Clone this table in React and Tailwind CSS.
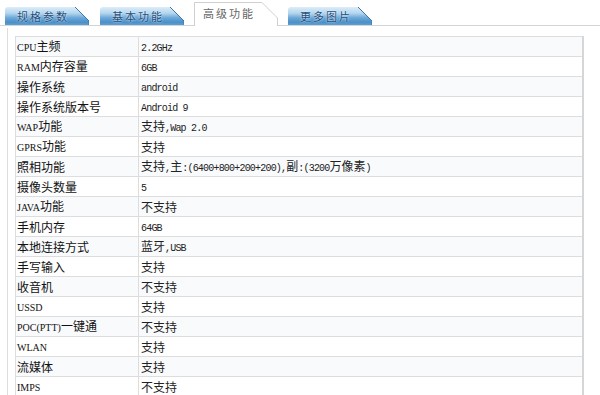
import React from 'react';

const rows = [
  ['CPU主频', '2.2GHz'],
  ['RAM内存容量', '6GB'],
  ['操作系统', 'android'],
  ['操作系统版本号', 'Android 9'],
  ['WAP功能', '支持,Wap 2.0'],
  ['GPRS功能', '支持'],
  ['照相功能', '支持,主:(6400+800+200+200),副:(3200万像素)'],
  ['摄像头数量', '5'],
  ['JAVA功能', '不支持'],
  ['手机内存', '64GB'],
  ['本地连接方式', '蓝牙,USB'],
  ['手写输入', '支持'],
  ['收音机', '不支持'],
  ['USSD', '支持'],
  ['POC(PTT)一键通', '不支持'],
  ['WLAN', '支持'],
  ['流媒体', '支持'],
  ['IMPS', '不支持'],
];

// split ascii runs so they get the narrow latin face
const Mixed = ({ text, asciiClass }) => (
  <span>
    {text.split(/([\x00-\x7f]+)/).map((part, i) =>
      /^[\x00-\x7f]+$/.test(part) ? (
        <span key={i} className={asciiClass}>{part}</span>
      ) : (
        part
      )
    )}
  </span>
);

const BlueTab = ({ label }) => (
  <div className="relative w-[84px] h-[18px] shrink-0">
    <svg className="absolute inset-0" width="84" height="18" viewBox="0 0 84 18">
      <defs>
        <linearGradient id="tabg" x1="0" y1="0" x2="0" y2="1">
          <stop offset="0" stopColor="#dcedf8" />
          <stop offset="0.35" stopColor="#b3d5ee" />
          <stop offset="0.6" stopColor="#6ca8d8" />
          <stop offset="0.85" stopColor="#4a90c9" />
          <stop offset="1" stopColor="#5f9fd2" />
        </linearGradient>
      </defs>
      <path d="M0,18 L0,3 Q0,0 3,0 L70,0 L84,14 L84,18 Z" fill="url(#tabg)" />
      <path d="M70,0 L84,14 L84,18" fill="none" stroke="#3b78a9" strokeWidth="1" />
    </svg>
    <span className="relative flex h-full items-center pl-[12px] text-[11px] tracking-[2px] text-[#234f7c] font-['Noto_Sans_CJK_SC',sans-serif] [text-shadow:0_0_2px_#fff]">
      {label}
    </span>
  </div>
);

const ActiveTab = ({ label }) => (
  <div className="relative w-[84px] h-[24px] shrink-0 -mb-px">
    <svg className="absolute inset-0" width="84" height="24" viewBox="0 0 84 24">
      <path d="M0.5,24 L0.5,0.5 L68,0.5 L83.5,16 L83.5,24" fill="#fff" stroke="#cfcfcf" strokeWidth="1" />
    </svg>
    <span className="relative flex h-full items-center pl-[9px] pb-[1px] text-[11px] tracking-[2px] text-[#666] font-['Noto_Sans_CJK_SC',sans-serif]">
      {label}
    </span>
  </div>
);

export default function App() {
  return (
    <div className="w-[600px] h-[395px] overflow-hidden bg-white font-['Noto_Sans_CJK_SC',sans-serif]">
      {/* tabs */}
      <div className="flex items-end gap-[10px] pl-[5px] h-[26px] border-b border-[#d4d4d4]">
        <BlueTab label="规格参数" />
        <div className="ml-[1px]">
          <BlueTab label="基本功能" />
        </div>
        <ActiveTab label="高级功能" />
        <BlueTab label="更多图片" />
      </div>

      {/* spec table */}
      <div className="ml-[7px] mt-[2px] border-l border-[#dddddd] pt-[8px] pl-[7px] h-[400px]">
        <div className="w-[569px] border-t border-l border-[#dddddd] border-r-2 border-r-[#d6d6d6]">
          {rows.map(([k, v], i) => (
            <div
              key={k}
              className={`flex h-[20px] border-b border-[#dddddd] text-[12px] leading-none text-[#111] ${
                i % 2 === 0 ? 'bg-[#f9fafc]' : 'bg-white'
              }`}
            >
              <div className="w-[123px] shrink-0 border-r border-[#dddddd] pl-[1px] flex items-center whitespace-nowrap">
                <Mixed text={k} asciiClass="font-['Liberation_Serif',serif] text-[10px]" />
              </div>
              <div className="flex-1 pl-[2px] flex items-center whitespace-nowrap text-[#222]">
                <Mixed text={v} asciiClass="font-['Liberation_Mono',monospace] text-[10px] tracking-[-0.8px]" />
              </div>
            </div>
          ))}
        </div>
      </div>
    </div>
  );
}
